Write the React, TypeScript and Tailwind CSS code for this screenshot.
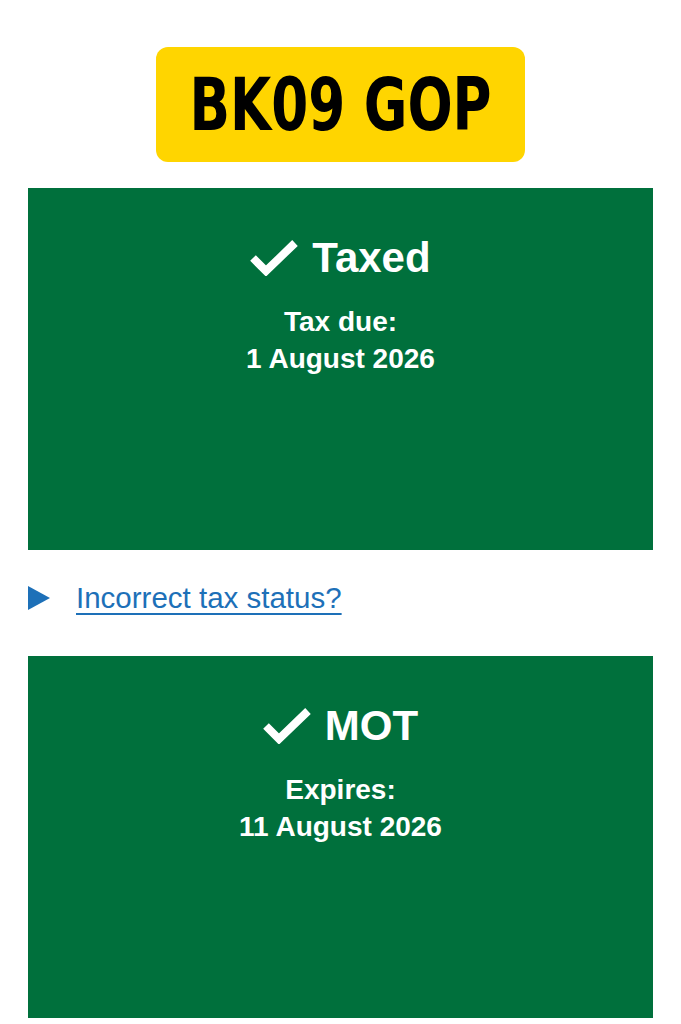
const font = { fontFamily: '"Liberation Sans", Arial, sans-serif' };

function Tick() {
  return (
    <svg width="48" height="36" viewBox="0 0 48 36" className="shrink-0">
      <path d="M3 18 L16 31 L45 3" fill="none" stroke="white" strokeWidth="8" strokeLinejoin="miter" />
    </svg>
  );
}

function StatusBox({ title, label, date }: { title: string; label: string; date: string }) {
  return (
    <div className="mx-[28px] h-[362px] bg-[#00703c] pt-[46px] text-white">
      <div className="flex h-[48px] items-center justify-center gap-[14px]">
        <Tick />
        <span className="text-[42px] font-bold leading-[48px]">{title}</span>
      </div>
      <div className="mt-[21px] text-center text-[28px] font-bold leading-[37px]">
        <div>{label}</div>
        <div>{date}</div>
      </div>
    </div>
  );
}

export default function App() {
  return (
    <div className="min-h-screen w-full bg-white pt-[47px]" style={font}>
      <div className="mx-auto flex h-[115px] w-[369px] items-center justify-center overflow-hidden rounded-[12px] bg-[#ffd500]">
        <span
          className="inline-block shrink-0 scale-x-[0.81] whitespace-nowrap text-[73px] font-bold leading-none text-black"
          style={{ fontFamily: '"DejaVu Sans Condensed", "DejaVu Sans", sans-serif' }}
        >
          BK09 GOP
        </span>
      </div>

      <div className="mt-[26px]">
        <StatusBox title="Taxed" label="Tax due:" date="1 August 2026" />
      </div>

      <div className="mx-[28px] mt-[28px] mb-[38px] flex h-[40px] items-center gap-[26px]">
        <svg width="22" height="24" viewBox="0 0 22 24" className="shrink-0">
          <path d="M0 0 L22 12 L0 24 Z" fill="#1d70b8" />
        </svg>
        <a href="#" className="text-[29.5px] leading-[40px] text-[#1d70b8] underline decoration-[2px] underline-offset-[5px]">
          Incorrect tax status?
        </a>
      </div>

      <StatusBox title="MOT" label="Expires:" date="11 August 2026" />
    </div>
  );
}
